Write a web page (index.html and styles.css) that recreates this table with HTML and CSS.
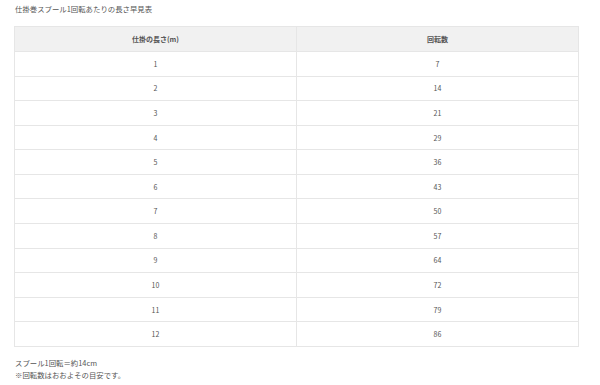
FILE: index.html
```html
<!DOCTYPE html>
<html lang="ja">
<head>
<meta charset="utf-8">
<link rel="stylesheet" href="styles.css">
</head>
<body>
<p class="title">仕掛巻スプール1回転あたりの長さ早見表</p>
<table class="chart">
<thead>
<tr><th>仕掛の長さ(m)</th><th>回転数</th></tr>
</thead>
<tbody>
<tr><td>1</td><td>7</td></tr>
<tr><td>2</td><td>14</td></tr>
<tr><td>3</td><td>21</td></tr>
<tr><td>4</td><td>29</td></tr>
<tr><td>5</td><td>36</td></tr>
<tr><td>6</td><td>43</td></tr>
<tr><td>7</td><td>50</td></tr>
<tr><td>8</td><td>57</td></tr>
<tr><td>9</td><td>64</td></tr>
<tr><td>10</td><td>72</td></tr>
<tr><td>11</td><td>79</td></tr>
<tr><td>12</td><td>86</td></tr>
</tbody>
</table>
<p class="note">スプール1回転＝約14cm<br>※回転数はおおよその目安です。</p>
</body>
</html>
```
FILE: styles.css
```css
html, body {
  margin: 0;
  padding: 0;
  background: #ffffff;
}
body {
  padding: 0 22px 0 14px;
  font-family: "Noto Sans CJK JP", "Noto Sans", sans-serif;
  color: #555555;
}
.title {
  margin: 3px 0 0 1px;
  font-size: 7.4px;
  line-height: 12px;
}
.chart {
  margin-top: 11px;
  width: 565px;
  border-collapse: collapse;
  table-layout: fixed;
  font-size: 7px;
}
.chart th,
.chart td {
  border: 1px solid #e6e6e6;
  text-align: center;
  padding: 0;
  width: 50%;
}
.chart th {
  background: #f1f1f1;
  font-weight: bold;
  color: #555555;
  height: 24px;
}
.chart td {
  height: 23.58px;
  color: #555555;
}
.note {
  margin: 10px 0 0 1px;
  font-size: 7.4px;
  line-height: 12px;
}
```
